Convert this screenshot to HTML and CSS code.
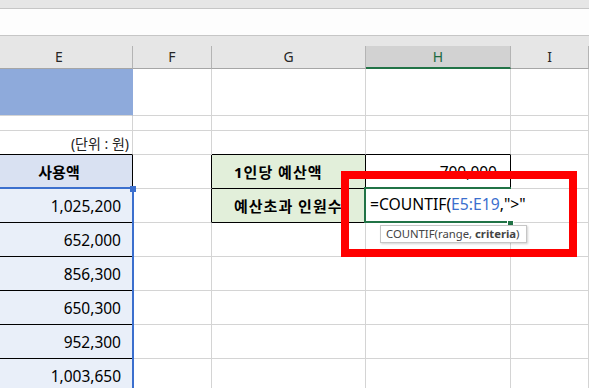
FILE: index.html
```html
<!DOCTYPE html>
<html lang="ko">
<head>
  <meta charset="UTF-8" />
  <title>예산초과 인원수</title>
  <link rel="stylesheet" href="styles.css">
</head>
<body>

<div class="ribbon"></div>
<div class="formula-bar"></div>

<div class="sheet-wrap">
  <!-- 열 머리글 -->
  <div class="col-heads">
    <div class="col-head">E</div>
    <div class="col-head">F</div>
    <div class="col-head">G</div>
    <div class="col-head sel">H</div>
    <div class="col-head">I</div>
  </div>

  <div class="row r-a">
    <div class="cell title-fill"></div>
    <div class="cell"></div>
    <div class="cell"></div>
    <div class="cell"></div>
    <div class="cell"></div>
  </div>

  <div class="row r-b">
    <div class="cell"></div>
    <div class="cell"></div>
    <div class="cell"></div>
    <div class="cell"></div>
    <div class="cell"></div>
  </div>

  <div class="row r-c">
    <div class="cell unit bb">(단위 : 원)</div>
    <div class="cell"></div>
    <div class="cell bb"></div>
    <div class="cell bb"></div>
    <div class="cell"></div>
  </div>

  <div class="row">
    <div class="cell head-e">사용액</div>
    <div class="cell br"></div>
    <div class="cell label">1인당 예산액</div>
    <div class="cell num box">700,000</div>
    <div class="cell"></div>
  </div>

  <div class="row">
    <div class="cell data">1,025,200</div>
    <div class="cell br"></div>
    <div class="cell label">예산초과 인원수</div>
    <div class="cell box"></div>
    <div class="cell"></div>
  </div>

  <div class="row">
    <div class="cell data">652,000</div>
    <div class="cell"></div>
    <div class="cell"></div>
    <div class="cell"></div>
    <div class="cell"></div>
  </div>

  <div class="row">
    <div class="cell data">856,300</div>
    <div class="cell"></div>
    <div class="cell"></div>
    <div class="cell"></div>
    <div class="cell"></div>
  </div>

  <div class="row">
    <div class="cell data">650,300</div>
    <div class="cell"></div>
    <div class="cell"></div>
    <div class="cell"></div>
    <div class="cell"></div>
  </div>

  <div class="row">
    <div class="cell data">952,300</div>
    <div class="cell"></div>
    <div class="cell"></div>
    <div class="cell"></div>
    <div class="cell"></div>
  </div>

  <div class="row">
    <div class="cell data">1,003,650</div>
    <div class="cell"></div>
    <div class="cell"></div>
    <div class="cell"></div>
    <div class="cell"></div>
  </div>
</div>

<!-- 참조 범위(E5:E19) 표시 -->
<div class="range-mark"></div>
<div class="range-handle"></div>

<!-- 편집 중인 셀 -->
<div class="cell-edit">=COUNTIF(<span class="ref">E5:E19</span>,"&gt;"</div>
<div class="fill-handle"></div>

<div class="tip">COUNTIF(range, <b>criteria</b>)</div>

<div class="red-box"></div>

</body>
</html>
```

FILE: styles.css
```css
* {
  box-sizing: border-box;
}

body {
  margin: 0;
  width: 589px;
  height: 388px;
  overflow: hidden;
  position: relative;
  background: #fff;
  font-family: "Noto Sans", "Noto Sans CJK KR", sans-serif;
  color: #000;
}

.ribbon {
  height: 9px;
  background: #e6e6e6;
  border-bottom: 1px solid #c6c6c6;
}

.formula-bar {
  height: 27px;
  background: #fdfdfd;
  border-bottom: 1px solid #c6c6c6;
}

.sheet-wrap {
  margin-left: -14px;
}

.col-heads,
.row {
  display: grid;
  grid-template-columns: 147px 79px 154px 145px 78px;
}

.col-heads {
  height: 33px;
  background: #e6e6e6;
  align-items: end;
}

.col-head {
  height: 23px;
  border-right: 1px solid #b4b4b4;
  border-bottom: 1px solid #a6a6a6;
  text-align: center;
  font-size: 14px;
  line-height: 22px;
  color: #262626;
}

.col-head.sel {
  background: #d2d2d2;
  border-bottom: 2px solid #217346;
  color: #1d6a40;
}

.row {
  height: 34px;
}

.r-a { height: 47px; }
.r-b { height: 15px; }
.r-c { height: 24px; }

.cell {
  display: flex;
  align-items: center;
  border-right: 1px solid #d4d4d4;
  border-bottom: 1px solid #d4d4d4;
  font-size: 15.5px;
  white-space: nowrap;
}

.title-fill {
  background: #8eaadb;
  border-right-color: #8eaadb;
}

.unit {
  justify-content: flex-end;
  padding-right: 3px;
  font-size: 14px;
  color: #222;
}

.bb {
  border-bottom-color: #000;
}

.br {
  border-right-color: #000;
}

.head-e {
  justify-content: center;
  background: #d9e1f2;
  border-right-color: #000;
  border-bottom-color: #000;
  font-size: 15px;
  font-weight: bold;
}

.data {
  justify-content: flex-end;
  padding-right: 11px;
  background: #e9eff9;
  border-right-color: #000;
  border-bottom-color: #000;
}

.label {
  padding-left: 22px;
  background: #e2efda;
  border-right-color: #000;
  border-bottom-color: #000;
  font-size: 15px;
  font-weight: bold;
  letter-spacing: 1px;
}

.box {
  border-right-color: #000;
  border-bottom-color: #000;
}

.num {
  justify-content: flex-end;
  padding-right: 13px;
}

.range-mark {
  position: absolute;
  left: -4px;
  top: 187px;
  width: 138px;
  height: 220px;
  border-top: 2px solid #3b6fce;
  border-right: 2px solid #3b6fce;
}

.range-handle {
  position: absolute;
  left: 130px;
  top: 186px;
  width: 6px;
  height: 6px;
  background: #3b6fce;
}

.cell-edit {
  position: absolute;
  left: 364px;
  top: 187px;
  width: 147px;
  height: 36px;
  padding-left: 4px;
  background: #fff;
  border: 2px solid #217346;
  border-right: none;
  font-size: 15.7px;
  line-height: 31px;
  white-space: nowrap;
}

.ref {
  color: #3b6fce;
}

.fill-handle {
  position: absolute;
  left: 507px;
  top: 220px;
  width: 7px;
  height: 7px;
  background: #217346;
  border: 1px solid #fff;
}

.tip {
  position: absolute;
  left: 380px;
  top: 225px;
  width: 147px;
  height: 18px;
  padding-left: 5px;
  background: #fff;
  border: 1px solid #c6c6c6;
  box-shadow: 1px 1px 2px rgba(0, 0, 0, 0.18);
  font-size: 11.3px;
  line-height: 16px;
  color: #444;
  white-space: nowrap;
}

.red-box {
  position: absolute;
  left: 341px;
  top: 171px;
  width: 236px;
  height: 86px;
  border: 8px solid #ff0000;
}
```
